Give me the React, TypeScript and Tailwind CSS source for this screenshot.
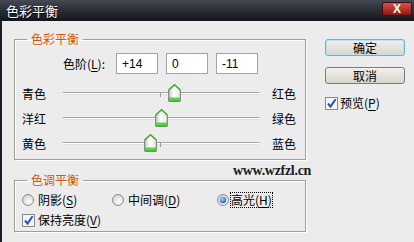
import type { CSSProperties, ReactNode } from "react";

function Thumb({ style }: { style: CSSProperties }) {
  return (
    <svg className="absolute top-[-9px]" style={style} width="13" height="18" viewBox="0 0 13 18">
      <defs>
        <linearGradient id="tb" x1="0" y1="0" x2="1" y2="0">
          <stop offset="0" stopColor="#c9c9c9" />
          <stop offset="0.45" stopColor="#ffffff" />
          <stop offset="1" stopColor="#e4e4e4" />
        </linearGradient>
      </defs>
      <path d="M6.5 0.7 L12.3 6 L12.3 16.8 L0.7 16.8 L0.7 6 Z" fill="url(#tb)" stroke="#6f7a6c" strokeWidth="1" />
      <path d="M0.7 6 L6.5 0.7 L12.3 6" fill="none" stroke="#3fa32c" strokeWidth="1.4" />
      <rect x="1" y="13.5" width="11" height="3.5" fill="#56d640" />
      <path d="M0.7 17.2 H12.3" stroke="#2f8a22" strokeWidth="1" />
    </svg>
  );
}

function Slider({ left, right, value }: { left: string; right: string; value: number }) {
  const pos = 6 + ((value + 100) / 200) * 186;
  return (
    <div className="flex h-[25px] items-center pl-[7px]">
      <span className="w-[40px] leading-[14px]">{left}</span>
      <div className="relative h-[3px] w-[198px] rounded-full border-t border-[#a4a4a4] bg-white shadow-[inset_0_-1px_0_#e0e0e0]">
        <div className="absolute left-[98px] top-[-1px] h-[5px] w-px bg-[#9a9a9a]" />
        <Thumb style={{ left: pos - 6.5 }} />
      </div>
      <span className="ml-[12px] leading-[14px]">{right}</span>
    </div>
  );
}

function Radio({ checked }: { checked?: boolean }) {
  return (
    <svg width="12" height="12" viewBox="0 0 12 12" className="shrink-0">
      <defs>
        <radialGradient id="rb" cx="0.6" cy="0.65" r="0.6">
          <stop offset="0" stopColor="#ffffff" />
          <stop offset="1" stopColor="#d6d6d6" />
        </radialGradient>
        <radialGradient id="rd" cx="0.4" cy="0.35" r="0.6">
          <stop offset="0" stopColor="#a9d4ff" />
          <stop offset="1" stopColor="#2a67d6" />
        </radialGradient>
      </defs>
      <circle cx="6" cy="6" r="5.5" fill="url(#rb)" stroke="#8e8e8e" strokeWidth="1" />
      {checked && <circle cx="6" cy="6" r="3.2" fill="url(#rd)" />}
    </svg>
  );
}

function Check() {
  return (
    <svg width="13" height="13" viewBox="0 0 13 13" className="shrink-0">
      <rect x="0.5" y="0.5" width="12" height="12" fill="#f4f4f4" stroke="#8a8a8a" />
      <path d="M3 6.5 L5.5 9.6 L10.6 2.2" fill="none" stroke="#1f4fc8" strokeWidth="2" />
    </svg>
  );
}

function Key({ k }: { k: string }) {
  return (
    <>
      (<span className="underline underline-offset-2">{k}</span>)
    </>
  );
}

function Group({ title, children }: { title: string; children: ReactNode }) {
  return (
    <fieldset className="w-[292px] border border-[#9e9e9e] shadow-[inset_1px_1px_0_#fff,1px_1px_0_#fff]">
      <legend className="ml-[12px] px-[4px] text-[12px] leading-[14px] text-[#cc5a0a]">{title}</legend>
      {children}
    </fieldset>
  );
}

export default function App() {
  const vals = [14, 0, -11];
  return (
    <div className="flex h-[242px] w-[414px] flex-col bg-[#1c1e25] font-['Noto_Sans_CJK_SC','Noto_Sans',sans-serif] text-[12px] text-black">
      <div className="flex h-[21px] shrink-0 items-center justify-between bg-gradient-to-b from-[#454955] to-[#14151a] pl-[6px] pr-[2px]">
        <span className="text-[13px] leading-none text-white [text-shadow:0_1px_1px_#000]">色彩平衡</span>
        <div className="mb-[4px] flex h-[14px] w-[30px] items-center justify-center rounded-[2px] border border-[#4a0d0d] bg-gradient-to-b from-[#d8514b] to-[#8e1512] text-[12px] font-bold leading-none text-white font-['Liberation_Sans',sans-serif]">
          X
        </div>
      </div>
      <div className="relative ml-[2px] flex flex-1 items-start bg-[#ececec]">
        <div className="flex flex-col pl-[12px] pt-[11px]">
          <Group title="色彩平衡">
            <div className="mt-[7px] flex h-[21px] items-center pl-[48px]">
              <span className="w-[53px] leading-[14px]">
                色阶<Key k="L" />:
              </span>
              <div className="flex gap-[8px]">
                {["+14", "0", "-11"].map((v) => (
                  <input
                    key={v}
                    readOnly
                    value={v}
                    className="h-[21px] w-[42px] border border-[#a3a3a3] bg-white pl-[5px] text-[12px] font-['Liberation_Sans',sans-serif] outline-none"
                  />
                ))}
              </div>
            </div>
            <div className="mt-[7px] pb-[3px]">
              <Slider left="青色" right="红色" value={vals[0]} />
              <Slider left="洋红" right="绿色" value={vals[1]} />
              <Slider left="黄色" right="蓝色" value={vals[2]} />
            </div>
          </Group>
          <div className="mt-[13px]">
            <Group title="色调平衡">
              <div className="mt-[6px] flex h-[14px] items-center pl-[7px]">
                <div className="flex w-[90px] items-center gap-[4px]">
                  <Radio />
                  <span className="leading-[14px]">
                    阴影<Key k="S" />
                  </span>
                </div>
                <div className="flex w-[105px] items-center gap-[4px]">
                  <Radio />
                  <span className="leading-[14px]">
                    中间调<Key k="D" />
                  </span>
                </div>
                <div className="flex items-center gap-[1px]">
                  <Radio checked />
                  <span className="border border-dotted border-black leading-[14px]">
                    高光<Key k="H" />
                  </span>
                </div>
              </div>
              <div className="mb-[4px] mt-[6px] flex h-[14px] items-center gap-[3px] pl-[7px]">
                <Check />
                <span className="leading-[14px]">
                  保持亮度<Key k="V" />
                </span>
              </div>
            </Group>
          </div>
        </div>
        <div className="ml-[19px] flex w-[80px] flex-col pt-[18px]">
          <button className="flex h-[17px] items-center justify-center rounded-[3px] border border-[#5fb4e2] bg-gradient-to-b from-[#f3f1ec] to-[#d9d5cb] text-[12px] leading-none shadow-[inset_0_0_0_1px_#b9e2f6]">
            确定
          </button>
          <button className="mt-[11px] flex h-[17px] items-center justify-center rounded-[3px] border border-[#7b7b7b] bg-gradient-to-b from-[#f3f1ec] to-[#d9d5cb] text-[12px] leading-none">
            取消
          </button>
          <div className="mt-[12px] flex items-center gap-[2px]">
            <Check />
            <span className="leading-[14px]">
              预览<Key k="P" />
            </span>
          </div>
        </div>
        <span className="pointer-events-none absolute left-[231px] top-[143px] text-[14px] font-bold leading-[14px] tracking-[-0.3px] text-[#1c1c1c] font-['Liberation_Serif',serif]">
          www.wzfzl.cn
        </span>
      </div>
    </div>
  );
}
